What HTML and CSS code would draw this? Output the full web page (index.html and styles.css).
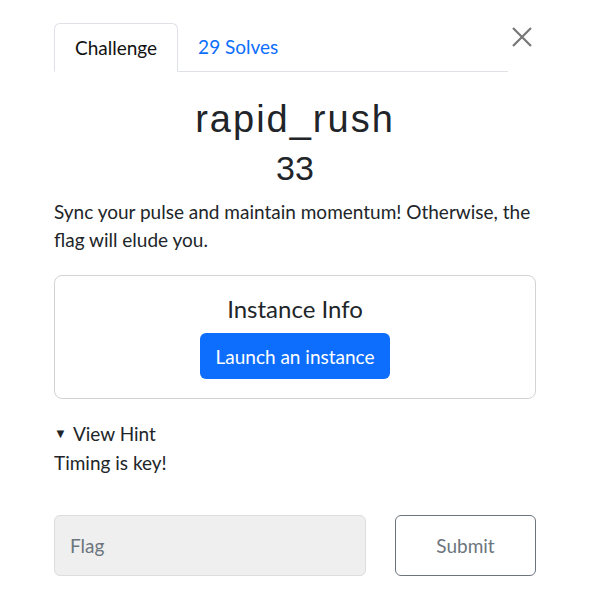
FILE: index.html
```html
<!DOCTYPE html>
<html>
<head>
<meta charset="utf-8">
<link rel="stylesheet" href="styles.css">
</head>
<body>
<div class="modal">
  <button class="close" aria-label="Close">
    <svg width="22" height="22" viewBox="0 0 22 22"><path d="M2 2 L20 20 M20 2 L2 20" stroke="#777" stroke-width="2.2" fill="none"/></svg>
  </button>
  <div class="tabs">
    <div class="tab active">Challenge</div>
    <div class="tab link">29 Solves</div>
  </div>
  <h2 class="name">rapid_rush</h2>
  <h3 class="value">33</h3>
  <p class="desc">Sync your pulse and maintain momentum! Otherwise, the flag will elude you.</p>
  <div class="instance">
    <div class="instance-title">Instance Info</div>
    <button class="launch">Launch an instance</button>
  </div>
  <div class="hint-toggle"><span class="tri">▼</span>View Hint</div>
  <div class="hint">Timing is key!</div>
  <div class="submit-row">
    <div class="flag">Flag</div>
    <button class="submit">Submit</button>
  </div>
</div>
</body>
</html>
```
FILE: styles.css
```css
html, body { margin: 0; padding: 0; background: #fff; }
body { font-family: Lato, "Noto Sans", sans-serif; color: #212529; }
.modal { position: relative; width: 482px; margin-left: 54px; padding-top: 23px; }
.close { position: absolute; top: 26px; left: 457px; background: none; border: 0; padding: 0; width: 22px; height: 22px; cursor: pointer; }
.tabs { display: flex; width: 454px; border-bottom: 1px solid #dee2e6; height: 49px; box-sizing: border-box; }
.tab { font-size: 19px; padding: 0 20px; line-height: 48px; }
.tab.active { border: 1px solid #dee2e6; border-bottom: 1px solid #fff; border-radius: 6px 6px 0 0; margin-bottom: -1px; height: 49px; box-sizing: border-box; color: #111; }
.tab.link { color: #0d6efd; }
.name { font-family: "Liberation Sans", Arial, sans-serif; font-weight: 400; font-size: 38px; letter-spacing: 2px; text-align: center; margin: 24px 0 0; line-height: 46px; color: #212529; }
.value { font-family: "Liberation Sans", Arial, sans-serif; font-weight: 400; font-size: 34px; text-align: center; margin: 4px 0 0; line-height: 44px; }
.desc { font-size: 19px; line-height: 28px; margin: 8px 0 21px; }
.instance { border: 1px solid #d3d3d3; border-radius: 8px; height: 124px; box-sizing: border-box; display: flex; flex-direction: column; align-items: center; padding-top: 18px; }
.instance-title { font-size: 24px; line-height: 30px; }
.launch { margin-top: 9px; background: #0d6efd; color: #fff; border: 0; border-radius: 6px; font-family: Lato, sans-serif; font-size: 19px; width: 190px; height: 46px; padding: 0; }
.hint-toggle { font-size: 19px; margin-top: 20px; line-height: 29px; display: flex; align-items: center; }
.tri { font-size: 13px; line-height: 1; margin: 0 6px 0 0; }
.hint { font-size: 19px; line-height: 29px; }
.submit-row { display: flex; justify-content: space-between; margin-top: 38px; }
.flag { width: 312px; height: 61px; box-sizing: border-box; background: #efefef; border: 1px solid #ddd; border-radius: 6px; color: #6c757d; font-size: 19px; line-height: 59px; padding-left: 15px; }
.submit { width: 141px; height: 61px; box-sizing: border-box; background: #fff; border: 1px solid #6c757d; border-radius: 6px; color: #6c757d; font-family: Lato, sans-serif; font-size: 19px; padding: 0; }
```
